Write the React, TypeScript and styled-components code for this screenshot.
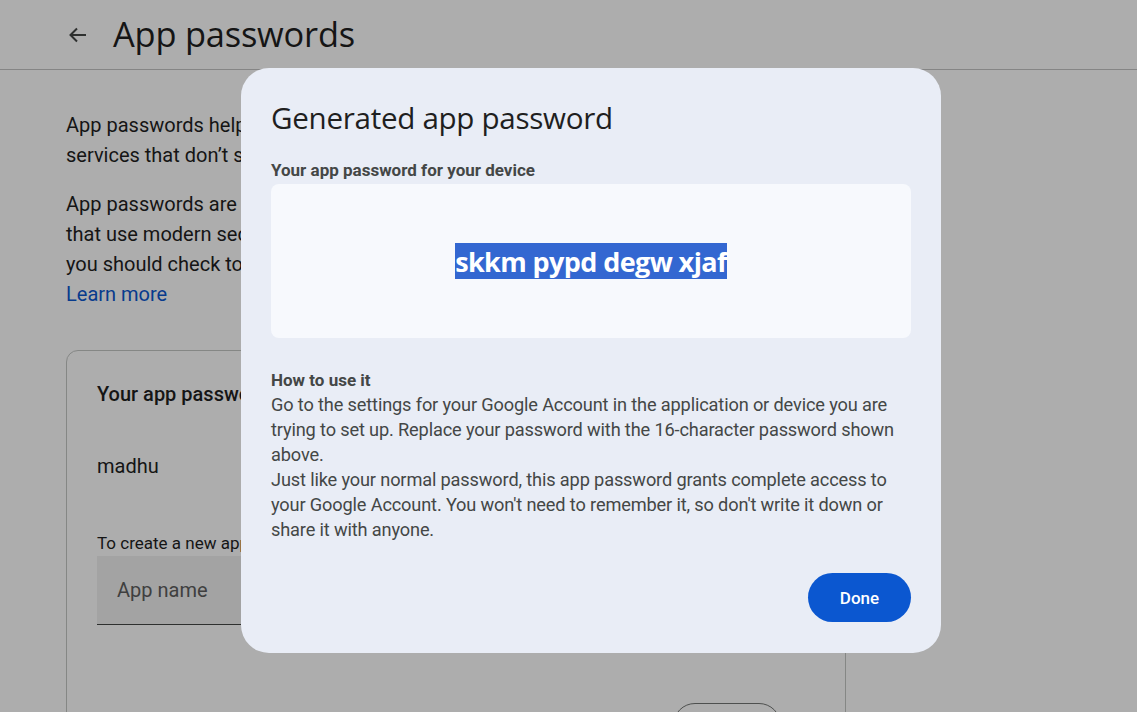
import React from "react";
import styled, { createGlobalStyle } from "styled-components";

const Global = createGlobalStyle`
  html, body { margin: 0; padding: 0; }
  body {
    width: 1137px; height: 712px; overflow: hidden; background: #fff;
    font-family: Roboto, "Noto Sans", Arial, sans-serif; color: #1f1f1f;
  }
`;

const Page = styled.div`
  position: relative;
  width: 1137px;
  height: 712px;
  overflow: hidden;
  background: #ffffff;
`;

const Header = styled.header`
  height: 70px;
  box-sizing: border-box;
  border-bottom: 1px solid #c4c4c4;
  display: flex;
  align-items: center;
  padding-left: 64px;
  gap: 21px;
`;

const BackButton = styled.button`
  width: 28px; height: 28px; border: 0; padding: 0; background: none;
  display: flex; align-items: center; justify-content: center; color: #444746;
`;

const PageTitle = styled.h1`
  margin: 0;
  font-family: "Open Sans", Roboto, sans-serif;
  font-weight: 400;
  font-size: 34.4px;
  letter-spacing: -0.2px;
  color: #1f1f1f;
  padding-bottom: 2px;
`;

const Main = styled.main`
  width: 780px;
  margin-left: 66px;
  padding-top: 40px;
`;

const Para = styled.p`
  margin: 0 0 19px;
  font-size: 20px;
  line-height: 30px;
  color: #1f1f1f;
  white-space: nowrap;
`;

const Link = styled.a`
  color: #0b57d0;
  text-decoration: none;
`;

const Card = styled.section`
  margin-top: 41px;
  border: 1px solid #c4c7c5;
  border-radius: 12px;
  padding: 30px 30px 0;
  height: 400px;
  box-sizing: border-box;
`;

const CardTitle = styled.h2`
  margin: 0;
  font-size: 20px;
  line-height: 26px;
  font-weight: 500;
  color: #1f1f1f;
`;

const ItemRow = styled.div`
  margin-top: 46px;
  font-size: 20px;
  line-height: 26px;
  color: #1f1f1f;
`;

const Hint = styled.div`
  margin-top: 53px;
  font-size: 17px;
  line-height: 22px;
  color: #1f1f1f;
  white-space: nowrap;
`;

const Field = styled.div`
  margin-top: 2px;
  width: 340px;
  height: 69px;
  box-sizing: border-box;
  background: #f0f0f0;
  border-bottom: 1px solid #444746;
  display: flex;
  align-items: center;
  padding-left: 20px;
  font-size: 20px;
  color: #5e5e5e;
`;

const CreateRow = styled.div`
  display: flex;
  justify-content: flex-end;
  margin-top: 78px;
  padding-right: 34px;
`;

const OutlineButton = styled.button`
  width: 108px;
  height: 44px;
  border-radius: 22px;
  border: 1px solid #747775;
  background: #fff;
  font-size: 16px;
  color: #0b57d0;
`;

const Scrim = styled.div`
  position: absolute;
  inset: 0;
  background: rgba(0, 0, 0, 0.32);
`;

const Dialog = styled.div`
  position: absolute;
  left: 241px;
  top: 68px;
  width: 700px;
  height: 585px;
  box-sizing: border-box;
  background: #e9edf6;
  border-radius: 28px;
  padding: 30px 30px 31px;
  display: flex;
  flex-direction: column;
`;

const DialogTitle = styled.h2`
  margin: 0;
  font-family: "Open Sans", Roboto, sans-serif;
  font-weight: 400;
  font-size: 29.6px;
  line-height: 40px;
  letter-spacing: -0.3px;
  color: #1f1f1f;
`;

const Label = styled.div`
  margin-top: 21px;
  font-size: 17px;
  line-height: 22px;
  font-weight: 700;
  color: #444746;
`;

const PasswordBox = styled.div`
  margin-top: 3px;
  height: 154px;
  border-radius: 8px;
  background: #f7f9fd;
  display: flex;
  align-items: center;
  justify-content: center;
`;

const PasswordText = styled.span`
  font-family: "Open Sans", Roboto, sans-serif;
  font-weight: 700;
  font-size: 27px;
  line-height: 35px;
  letter-spacing: -0.6px;
  color: #ffffff;
  background: #3367d1;
  padding-top: 1px;
`;

const HowTitle = styled.div`
  margin-top: 31px;
  font-size: 17px;
  line-height: 22px;
  font-weight: 700;
  color: #444746;
`;

const HowText = styled.p`
  margin: 1px 0 0;
  font-size: 18.2px;
  line-height: 25px;
  color: #444746;
  letter-spacing: -0.15px;
  white-space: nowrap;
`;

const Actions = styled.div`
  margin-top: auto;
  display: flex;
  justify-content: flex-end;
`;

const PrimaryButton = styled.button`
  width: 103px;
  height: 49px;
  border: 0;
  border-radius: 25px;
  background: #0b57d0;
  color: #fff;
  font-family: Roboto, sans-serif;
  font-weight: 500;
  font-size: 17px;
`;

export default function App() {
  return (
    <Page>
      <Global />
      <Header>
        <BackButton aria-label="Back">
          <svg width="24" height="24" viewBox="0 0 24 24" fill="none">
            <path d="M20 12H5M11 5.5 4.5 12 11 18.5" stroke="#444746" strokeWidth="2" />
          </svg>
        </BackButton>
        <PageTitle>App passwords</PageTitle>
      </Header>
      <Main>
        <Para>
          App passwords help you sign into your Google Account on older apps and
          <br />
          services that don’t support modern security standards.
        </Para>
        <Para>
          App passwords are less secure than using up-to-date apps and services
          <br />
          that use modern security standards. Before you create an app password,
          <br />
          you should check to see if your app needs this in order to sign in.
          <br />
          <Link href="#">Learn more</Link>
        </Para>
        <Card>
          <CardTitle>Your app passwords</CardTitle>
          <ItemRow>madhu</ItemRow>
          <Hint>To create a new app specific password, type a name for it below...</Hint>
          <Field>App name</Field>
          <CreateRow>
            <OutlineButton>Create</OutlineButton>
          </CreateRow>
        </Card>
      </Main>
      <Scrim />
      <Dialog role="dialog">
        <DialogTitle>Generated app password</DialogTitle>
        <Label>Your app password for your device</Label>
        <PasswordBox>
          <PasswordText>skkm pypd degw xjaf</PasswordText>
        </PasswordBox>
        <HowTitle>How to use it</HowTitle>
        <HowText>
          Go to the settings for your Google Account in the application or device you are
          <br />
          trying to set up. Replace your password with the 16-character password shown
          <br />
          above.
          <br />
          Just like your normal password, this app password grants complete access to
          <br />
          your Google Account. You won't need to remember it, so don't write it down or
          <br />
          share it with anyone.
        </HowText>
        <Actions>
          <PrimaryButton>Done</PrimaryButton>
        </Actions>
      </Dialog>
    </Page>
  );
}
